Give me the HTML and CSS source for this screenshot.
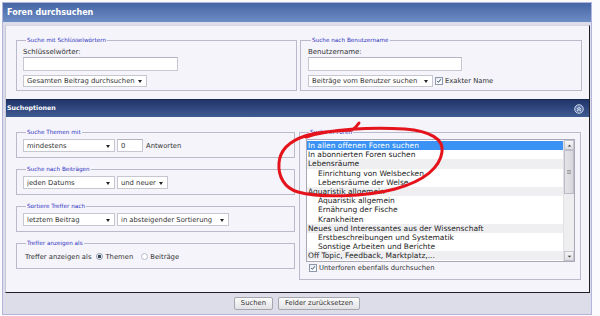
FILE: index.html
```html
<!DOCTYPE html>
<html lang="de">
<head>
<meta charset="utf-8">
<title>Foren durchsuchen</title>
<link rel="stylesheet" href="styles.css">
</head>
<body>
<form class="frame">
  <h1 class="head">Foren durchsuchen</h1>
  <div class="panel">
    <div class="top-row">
      <fieldset class="fs fs-kw">
        <legend>Suche mit Schlüsselwörtern</legend>
        <label class="lbl" for="kw">Schlüsselwörter:</label>
        <input class="txt w-kw" id="kw" type="text">
        <div class="line">
          <span class="sel w-gesamt"><select><option>Gesamten Beitrag durchsuchen</option></select></span>
        </div>
      </fieldset>
      <fieldset class="fs fs-user">
        <legend>Suche nach Benutzername</legend>
        <label class="lbl" for="user">Benutzername:</label>
        <input class="txt w-user" id="user" type="text">
        <div class="line">
          <span class="sel w-beitr"><select><option>Beiträge vom Benutzer suchen</option></select></span>
          <span class="chk"><span class="box" role="checkbox" aria-checked="true"><svg viewBox="0 0 8 8"><path d="M1.6 4.2 L3.2 5.8 L6.4 1.8"/></svg></span><span class="chk-text">Exakter Name</span></span>
        </div>
      </fieldset>
    </div>

    <div class="bar">
      <span class="bar-title">Suchoptionen</span>
      <svg class="collapse" viewBox="0 0 10 10"><circle cx="5" cy="5" r="4.3"/><path d="M3 5.2 L5 3.4 L7 5.2 M3 7.2 L5 5.4 L7 7.2"/></svg>
    </div>

    <div class="opts">
      <div class="col">
        <fieldset class="fs">
          <legend>Suche Themen mit</legend>
          <div class="line">
            <span class="sel w-92"><select><option>mindestens</option></select></span>
            <input class="txt num" type="text" value="0">
            <span class="after">Antworten</span>
          </div>
        </fieldset>
        <fieldset class="fs">
          <legend>Suche nach Beiträgen</legend>
          <div class="line">
            <span class="sel w-92"><select><option>jeden Datums</option></select></span>
            <span class="sel w-51"><select><option>und neuer</option></select></span>
          </div>
        </fieldset>
        <fieldset class="fs">
          <legend>Sortiere Treffer nach</legend>
          <div class="line">
            <span class="sel w-92"><select><option>letztem Beitrag</option></select></span>
            <span class="sel w-112"><select><option>in absteigender Sortierung</option></select></span>
          </div>
        </fieldset>
        <fieldset class="fs">
          <legend>Treffer anzeigen als</legend>
          <div class="line radios">
            <span class="rlabel">Treffer anzeigen als</span>
            <span class="radio on" role="radio" aria-checked="true"></span><span class="rtext">Themen</span>
            <span class="radio" role="radio" aria-checked="false"></span><span class="rtext">Beiträge</span>
          </div>
        </fieldset>
      </div>

      <fieldset class="fs fs-forums">
        <legend>Suche in Foren</legend>
        <div class="listbox" role="listbox">
          <ul class="items">
            <li class="item sel-item">In allen offenen Foren suchen</li>
            <li class="item">In abonnierten Foren suchen</li>
            <li class="item cat">Lebensräume</li>
            <li class="item sub">Einrichtung von Welsbecken</li>
            <li class="item sub">Lebensräume der Welse</li>
            <li class="item cat">Aquaristik allgemein</li>
            <li class="item sub">Aquaristik allgemein</li>
            <li class="item sub">Ernährung der Fische</li>
            <li class="item sub">Krankheiten</li>
            <li class="item cat">Neues und Interessantes aus der Wissenschaft</li>
            <li class="item sub">Erstbeschreibungen und Systematik</li>
            <li class="item sub">Sonstige Arbeiten und Berichte</li>
            <li class="item cat">Off Topic, Feedback, Marktplatz,...</li>
          </ul>
          <div class="sb">
            <span class="sb-btn"><svg viewBox="0 0 8 8"><path d="M2 5 L4 3 L6 5 Z"/></svg></span>
            <span class="sb-thumb"><svg viewBox="0 0 6 6"><path d="M1 1.5 H5 M1 3 H5 M1 4.5 H5"/></svg></span>
            <span class="sb-track"></span>
            <span class="sb-btn"><svg viewBox="0 0 8 8"><path d="M2 3 L4 5 L6 3 Z"/></svg></span>
          </div>
        </div>
        <span class="chk chk-sub"><span class="box" role="checkbox" aria-checked="true"><svg viewBox="0 0 8 8"><path d="M1.6 4.2 L3.2 5.8 L6.4 1.8"/></svg></span><span class="chk-text">Unterforen ebenfalls durchsuchen</span></span>
      </fieldset>
    </div>
  </div>

  <div class="buttons">
    <button type="button" class="btn">Suchen</button>
    <button type="button" class="btn">Felder zurücksetzen</button>
  </div>
</form>

<svg class="scribble" viewBox="0 0 600 316" width="600" height="316">
  <path d="M306 137 C330 129 370 127 405 129 C430 131 444 139 442 152 C440 167 425 181 395 189 C365 197 320 198 298 192 C284 188 278 176 279 163 C280 150 290 141 305 136 C320 131 340 131 352 130 C355 128 357 126 359 123"/>
</svg>
</body>
</html>
```

FILE: styles.css
```css
* { box-sizing: border-box; }

html, body {
  margin: 0;
  padding: 0;
}

body {
  width: 600px;
  height: 316px;
  overflow: hidden;
  position: relative;
  background: #fbfbfd;
  font-family: "DejaVu Sans", Verdana, sans-serif;
  font-size: 6.8px;
  color: #333;
}

.frame {
  margin: 2px 0 0 2px;
  width: 590px;
  border: 1px solid #b2b4dc;
  background: #dcdde8;
}

.head {
  margin: 0;
  height: 19px;
  padding-left: 4px;
  background: linear-gradient(#4565a4, #6e8dc5);
  color: #fff;
  font: bold 8px/19px "DejaVu Sans", sans-serif;
}

.panel {
  margin: 3px 1px 0 2px;
  border: 1px solid;
  border-color: #d6d6e2 #1e1e24 #1e1e24 #c8c8d8;
  background: #f4f4fa;
  padding-bottom: 12px;
}

/* fieldsets */
.fs {
  margin: 0;
  min-width: 0;
  border: 1px solid #babaca;
  padding: 0 6px 3px 6px;
}

.fs legend {
  padding: 0 1px;
  margin-left: 3px;
  font-size: 5.7px;
  line-height: 7px;
  color: #3030c0;
}

.top-row {
  display: grid;
  grid-template-columns: 281px 282px;
  column-gap: 3px;
  padding: 11px 0 0 10px;
}

.fs-user { padding-left: 7px; }

.lbl {
  display: block;
  margin-top: 4px;
  line-height: 8px;
  font-size: 7px;
}

.txt {
  display: block;
  height: 14px;
  margin: 1px 0 0 0;
  padding: 0 3px;
  border: 1px solid #c8c8d2;
  border-top-color: #b4b4c0;
  background: #fff;
  font: inherit;
  color: #333;
  outline: none;
}

.w-kw { width: 155px; }
.w-user { width: 154px; }

.line {
  display: flex;
  align-items: center;
  margin-top: 4px;
}

.sel {
  position: relative;
  display: inline-block;
  height: 12px;
  margin-right: 2px;
}

.sel select {
  appearance: none;
  -webkit-appearance: none;
  width: 100%;
  height: 100%;
  margin: 0;
  padding: 0 0 0 3px;
  border: 1px solid #c6c6d0;
  border-radius: 0;
  background: #fff;
  font: inherit;
  color: #333;
  line-height: 10px;
}

.sel::after {
  content: "";
  position: absolute;
  right: 5px;
  top: 50%;
  margin-top: -1px;
  border-left: 2.5px solid transparent;
  border-right: 2.5px solid transparent;
  border-top: 3px solid #222;
}

.w-gesamt { width: 124px; }
.w-beitr { width: 125px; }
.w-92 { width: 92px; height: 13px; }
.w-51 { width: 51px; height: 13px; }
.w-112 { width: 112px; height: 13px; }

.chk {
  display: inline-flex;
  align-items: center;
}

.box {
  width: 8px;
  height: 8px;
  border: 1px solid #8e98aa;
  background: linear-gradient(#e8ecf2, #fff);
  display: inline-block;
}

.box svg {
  display: block;
  width: 6px;
  height: 6px;
}

.box path {
  fill: none;
  stroke: #2a3a5a;
  stroke-width: 1.2;
}

.chk-text { margin-left: 2px; }

/* options bar */
.bar {
  margin-top: 8px;
  height: 18px;
  display: flex;
  align-items: center;
  padding: 0 5px 0 1px;
  background: linear-gradient(#21356a, #3f5b93);
  border-top: 1px solid #1a2a50;
}

.bar-title {
  color: #fff;
  font: bold 6.3px/1 "DejaVu Sans", sans-serif;
}

.collapse {
  margin-left: auto;
  width: 10px;
  height: 10px;
}

.collapse circle {
  fill: #5a76aa;
  stroke: #d8e0f0;
  stroke-width: 0.9;
}

.collapse path {
  fill: none;
  stroke: #fff;
  stroke-width: 0.9;
}

.opts {
  display: grid;
  grid-template-columns: 279px 282px;
  column-gap: 4px;
  padding: 11.5px 0 0 10px;
  align-items: start;
}

.col {
  display: flex;
  flex-direction: column;
  gap: 7.5px;
}

.opts .line { margin-top: 3.5px; }
.opts .fs { padding-bottom: 5px; }

.num {
  display: inline-block;
  width: 26px;
  height: 13px;
  margin: 0;
}

.after { margin-left: 3px; }

.radios { height: 13px; padding-left: 2px; }

.rlabel { margin-right: 5px; }

.radio {
  width: 7px;
  height: 7px;
  border-radius: 50%;
  border: 1px solid #b4bccb;
  background: #fff;
  display: inline-block;
}

.radio.on {
  border-color: #8a96ac;
  background: radial-gradient(circle, #3c4a5c 0 1.6px, #fff 2.1px);
}

.rtext { margin: 0 8px 0 2px; }

/* forum listbox */
.fs-forums { padding: 0 6px 2px 6px; }

.listbox {
  margin-top: 3.5px;
  width: 269px;
  height: 123px;
  border: 1px solid #a8a8b8;
  background: #fff;
  display: flex;
}

.items {
  list-style: none;
  margin: 0;
  padding: 1px 0 0 0;
  flex: 1;
  overflow: hidden;
}

.item {
  height: 9.2px;
  line-height: 9.2px;
  padding-left: 1px;
  font-size: 7.5px;
  white-space: nowrap;
  color: #222;
}

.item.cat { background: #efeff2; }
.item.sub { padding-left: 11px; }

.item.sel-item {
  background: #3a93f4;
  color: #fff;
}

.sb {
  width: 11px;
  display: flex;
  flex-direction: column;
  background: #eeeef0;
  border-left: 1px solid #e2e2e6;
}

.sb-btn {
  height: 10px;
  border: 1px solid #c4c4cc;
  background: linear-gradient(#f6f6f8, #dcdce2);
  display: flex;
  align-items: center;
  justify-content: center;
}

.sb-btn svg { width: 7px; height: 7px; }
.sb-btn path { fill: #3a3a3a; }

.sb-thumb {
  height: 44px;
  border: 1px solid #bcbcc6;
  background: linear-gradient(90deg, #e4e4e8, #d6d6dc);
  display: flex;
  align-items: center;
  justify-content: center;
}

.sb-thumb svg { width: 6px; height: 6px; }
.sb-thumb path { stroke: #888; stroke-width: 0.7; }

.sb-track { flex: 1; }

.chk-sub {
  margin: 1px 0 0 3px;
  height: 9px;
}

/* buttons */
.buttons {
  display: flex;
  justify-content: center;
  gap: 5px;
  padding: 4px 0;
}

.btn {
  height: 13px;
  margin: 0;
  padding: 0 6px;
  border: 1px solid #a6a6ae;
  border-radius: 2px;
  background: linear-gradient(#fbfbfb, #e2e2e6);
  font: inherit;
  color: #333;
  line-height: 11px;
}

/* hand-drawn annotation */
.scribble {
  position: absolute;
  left: 0;
  top: 0;
  pointer-events: none;
}

.scribble path {
  fill: none;
  stroke: #e5141c;
  stroke-width: 3;
  stroke-linecap: round;
  stroke-linejoin: round;
}
```
